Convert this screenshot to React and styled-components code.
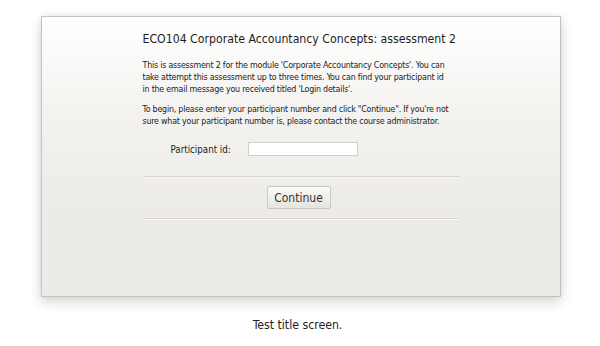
import React from "react";
import styled, { createGlobalStyle } from "styled-components";

const Global = createGlobalStyle`
  html, body { margin: 0; padding: 0; background: #ffffff; }
  body { font-family: "DejaVu Sans", "Liberation Sans", sans-serif; color: #222; }
`;

const Page = styled.div`
  width: 600px;
  height: 346px;
  display: flex;
  flex-direction: column;
  align-items: center;
  padding-top: 16px;
  box-sizing: border-box;
`;

const Panel = styled.div`
  width: 520px;
  height: 281px;
  box-sizing: border-box;
  margin-left: 1px;
  border: 1px solid #c4c2be;
  background: linear-gradient(to bottom, #ffffff 0%, #f3f2ef 35%, #edebe8 70%, #ecebe7 100%);
  box-shadow: 0 5px 12px rgba(0, 0, 0, 0.16), 0 0 6px rgba(0, 0, 0, 0.06);
  display: flex;
  justify-content: center;
  padding-top: 14px;
`;

const Content = styled.div`
  width: 316px;
  display: flex;
  flex-direction: column;
`;

const Title = styled.h1`
  margin: 0;
  font-family: "DejaVu Sans Condensed", "DejaVu Sans", sans-serif;
  font-weight: normal;
  font-size: 12.2px;
  line-height: 16px;
  color: #1e1e1e;
  white-space: nowrap;
`;

const Para = styled.p`
  margin: ${(p) => p.$top}px 0 0 0;
  padding-top: ${(p) => p.$nudge || 0}px;
  font-family: "DejaVu Sans Condensed", "DejaVu Sans", sans-serif;
  font-size: 8.8px;
  letter-spacing: -0.2px;
  line-height: 12px;
  color: #222;
  white-space: nowrap;
`;

const FormRow = styled.div`
  display: flex;
  align-items: center;
  margin-top: 15px;
  padding-left: 28px;
  height: 14px;
`;

const Label = styled.label`
  font-family: "DejaVu Sans Condensed", "DejaVu Sans", sans-serif;
  font-size: 9.7px;
  color: #222;
  width: 77px;
  white-space: nowrap;
`;

const Input = styled.input`
  width: 110px;
  height: 14px;
  box-sizing: border-box;
  border: 1px solid #d0cfcc;
  background: #ffffff;
  padding: 0;
  margin: 0;
`;

const Rule = styled.hr`
  margin: ${(p) => p.$top}px 0 0 0;
  border: none;
  border-top: 1px solid #d9d5d3;
  border-bottom: 1px solid #f8f7f5;
  height: 0;
`;

const ButtonRow = styled.div`
  display: flex;
  justify-content: center;
  margin-top: 8px;
`;

const Button = styled.button`
  width: 64px;
  height: 23px;
  margin-right: 4px;
  box-sizing: border-box;
  border: 1px solid #c9c7c3;
  border-radius: 2px;
  background: linear-gradient(to bottom, #fbfbfa 0%, #f0efec 50%, #e6e4e0 100%);
  font-family: "DejaVu Sans Condensed", "DejaVu Sans", sans-serif;
  font-size: 12px;
  color: #333;
  padding: 0;
`;

const Caption = styled.div`
  margin-top: 21px;
  margin-left: -5px;
  font-family: "DejaVu Sans Condensed", "DejaVu Sans", sans-serif;
  font-size: 12.2px;
  color: #222;
`;

export default function App() {
  return (
    <>
      <Global />
      <Page>
        <Panel>
          <Content>
            <Title>ECO104 Corporate Accountancy Concepts: assessment 2</Title>
            <Para $top={11} $nudge={1}>
              This is assessment 2 for the module 'Corporate Accountancy Concepts'. You can
              <br />
              take attempt this assessment up to three times. You can find your participant id
              <br />
              in the email message you received titled 'Login details'.
            </Para>
            <Para $top={8}>
              To begin, please enter your participant number and click "Continue". If you're not
              <br />
              sure what your participant number is, please contact the course administrator.
            </Para>
            <FormRow>
              <Label htmlFor="pid">Participant id:</Label>
              <Input id="pid" type="text" />
            </FormRow>
            <Rule $top={20} />
            <ButtonRow>
              <Button>Continue</Button>
            </ButtonRow>
            <Rule $top={9} />
          </Content>
        </Panel>
        <Caption>Test title screen.</Caption>
      </Page>
    </>
  );
}
